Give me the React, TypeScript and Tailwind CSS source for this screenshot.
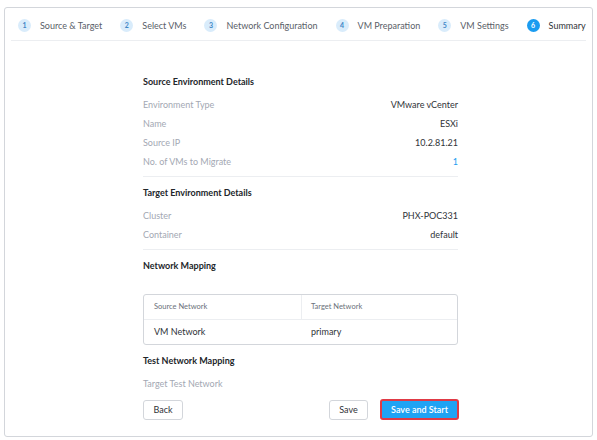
import React from "react";

const steps = [
    "Source & Target",
    "Select VMs",
    "Network Configuration",
    "VM Preparation",
    "VM Settings",
    "Summary",
];

type RowProps = {
    label: string;
    value: string;
    accent?: boolean;
};

function Row({ label, value, accent }: RowProps) {
    return (
        <div className="flex h-[19px] items-center justify-between text-[9px]">
            <span className="text-[#a3a8b3]">{label}</span>
            <span className={accent ? "text-[#1b9cf0]" : "text-[#2f3338]"}>
                {value}
            </span>
        </div>
    );
}

function Heading({ children }: { children: React.ReactNode }) {
    return (
        <div className="flex h-[24px] items-center pb-[3px] text-[9px] font-bold text-[#22262a]">
            {children}
        </div>
    );
}

export default function App() {
    return (
        <div className="h-[440px] w-[597px] bg-white px-[4px] pt-[7px] font-['Lato',sans-serif]">
            <div className="h-[430px] rounded-[3px] border border-[#d3d6db]">
                {/* wizard steps */}
                <div className="mx-[6px] flex h-[33px] items-center gap-[18px] whitespace-nowrap border-b border-[#eceef1] pl-[7px] pt-[3px]">
                    {steps.map((s, i) => {
                        const active = i === steps.length - 1;
                        return (
                            <div key={s} className="flex shrink-0 items-center gap-[9px]">
                                <span
                                    className={
                                        active
                                            ? "flex h-[13px] w-[13px] items-center justify-center rounded-full bg-[#1b9cf0] text-[7px] font-bold text-white"
                                            : "flex h-[13px] w-[13px] items-center justify-center rounded-full bg-[#d9ecfb] text-[7px] font-bold text-[#3f86c6]"
                                    }
                                >
                                    {i + 1}
                                </span>
                                <span
                                    className={
                                        active
                                            ? "text-[9px] text-[#2f3338]"
                                            : "text-[9px] text-[#5a6068]"
                                    }
                                >
                                    {s}
                                </span>
                            </div>
                        );
                    })}
                </div>

                <div className="ml-[138px] w-[315px] pt-[30px]">
                    <Heading>Source Environment Details</Heading>
                    <Row label="Environment Type" value="VMware vCenter" />
                    <Row label="Name" value="ESXi" />
                    <Row label="Source IP" value="10.2.81.21" />
                    <Row label="No. of VMs to Migrate" value="1" accent />
                    <div className="mt-[5px] border-t border-[#eceef1]" />

                    <div className="mt-[5px]">
                        <Heading>Target Environment Details</Heading>
                    </div>
                    <Row label="Cluster" value="PHX-POC331" />
                    <Row label="Container" value="default" />
                    <div className="mt-[5px] border-t border-[#eceef1]" />

                    <div className="mt-[5px]">
                        <Heading>Network Mapping</Heading>
                    </div>

                    <div className="mt-[15px] rounded-[3px] border border-[#d3d6db]">
                        <div className="flex h-[25px] border-b border-[#eceef1] text-[7.5px] text-[#6b717a]">
                            <div className="flex w-[158px] items-center border-r border-[#eceef1] pl-[10px]">
                                Source Network
                            </div>
                            <div className="flex items-center pl-[9px]">Target Network</div>
                        </div>
                        <div className="flex h-[24px] text-[9px] text-[#2f3338]">
                            <div className="flex w-[158px] items-center pl-[10px]">VM Network</div>
                            <div className="flex items-center pl-[9px]">primary</div>
                        </div>
                    </div>

                    <div className="mt-[5px]">
                        <Heading>Test Network Mapping</Heading>
                    </div>
                    <div className="flex h-[19px] items-center text-[9px] text-[#a3a8b3]">
                        Target Test Network
                    </div>

                    <div className="mt-[6px] flex items-center">
                        <button className="h-[20px] w-[40px] rounded-[3px] border border-[#d3d6db] bg-white text-[9px] text-[#2f3338]">
                            Back
                        </button>
                        <div className="flex-1" />
                        <button className="h-[20px] w-[39px] rounded-[3px] border border-[#d3d6db] bg-white text-[9px] text-[#2f3338]">
                            Save
                        </button>
                        <button className="ml-[12px] mr-[-1px] h-[21px] w-[79px] rounded-[3px] border-2 border-[#e03a45] bg-[#1fa3f4] text-[9px] font-semibold text-white">
                            Save and Start
                        </button>
                    </div>
                </div>
            </div>
        </div>
    );
}
